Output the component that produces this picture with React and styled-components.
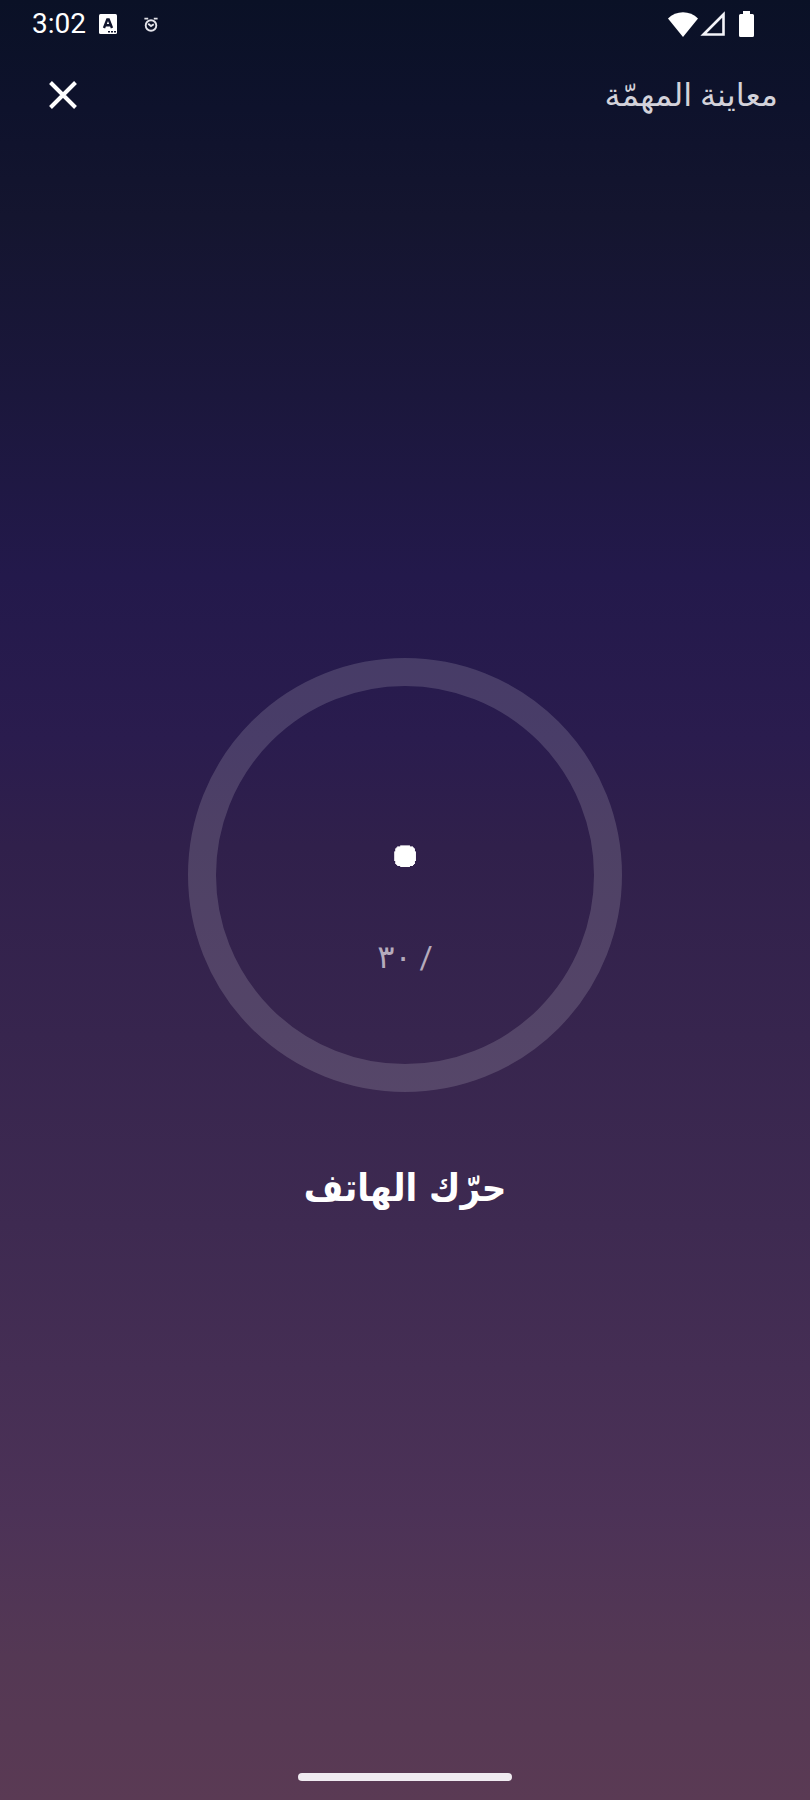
import React from "react";
import styled, { createGlobalStyle } from "styled-components";

const GlobalStyle = createGlobalStyle`
  * {
    box-sizing: border-box;
  }
  body {
    margin: 0;
    background-color: #10152a;
    color: #ffffff;
    font-family: Roboto, "DejaVu Sans", sans-serif;
  }
`;

const Screen = styled.div`
  display: flex;
  flex-direction: column;
  min-height: 100vh;
  background-image: linear-gradient(
    to bottom,
    #0a1126 0%,
    #0e122c 6%,
    #14152f 12%,
    #1b173c 22%,
    #23194b 32%,
    #2a1c4e 41%,
    #30204b 47%,
    #3e2a51 68%,
    #4c3257 84%,
    #543854 92%,
    #5a3a54 100%
  );
`;

const StatusBar = styled.div`
  display: flex;
  align-items: center;
  justify-content: space-between;
  height: 48px;
  padding: 0 56px 0 32px;
`;

const StatusGroup = styled.div`
  display: flex;
  align-items: center;
`;

const Clock = styled.time`
  margin-right: 13px;
  font-size: 28px;
  line-height: 32px;
`;

const StatusIcon = styled.svg`
  display: block;
  margin-left: ${(props) => props.$space || "0"};
`;

const Header = styled.header`
  display: flex;
  align-items: center;
  justify-content: space-between;
  height: 94px;
  padding: 0 32px;
`;

const CloseButton = styled.button`
  display: flex;
  align-items: center;
  justify-content: center;
  width: 62px;
  height: 62px;
  padding: 0;
  border: 0;
  background: none;
  color: #ffffff;
  cursor: pointer;
`;

const Title = styled.h1`
  margin: 0;
  color: #d3d2da;
  font-size: 32px;
  font-weight: 400;
  line-height: 48px;
`;

const Main = styled.main`
  flex: 1;
  display: flex;
  flex-direction: column;
  align-items: center;
  justify-content: center;
  gap: 66px;
  padding-bottom: 40px;
`;

const Ring = styled.div`
  display: flex;
  flex-direction: column;
  align-items: center;
  justify-content: center;
  gap: 20px;
  width: 434px;
  height: 434px;
  padding-top: 24px;
  border: 28px solid rgba(255, 255, 255, 0.15);
  border-radius: 50%;
`;

/* the shadows round off the square zero glyph */
const Count = styled.div`
  font-size: 56px;
  font-weight: 700;
  line-height: 120px;
  text-shadow:
    6px 0 #fff, -6px 0 #fff, 0 6px #fff, 0 -6px #fff,
    5px 3px #fff, -5px 3px #fff, 5px -3px #fff, -5px -3px #fff,
    3px 5px #fff, -3px 5px #fff, 3px -5px #fff, -3px -5px #fff,
    4px 4px #fff, -4px 4px #fff, 4px -4px #fff, -4px -4px #fff;
`;

const Total = styled.div`
  color: #b5abbc;
  font-size: 32px;
  line-height: 48px;
`;

const Instruction = styled.p`
  margin: 0;
  font-family: "DejaVu Sans Condensed", "DejaVu Sans", sans-serif;
  font-size: 38px;
  font-weight: 700;
  line-height: 60px;
`;

const NavHandle = styled.div`
  width: 214px;
  height: 8px;
  margin: 0 auto 19px;
  border-radius: 4px;
  background-color: #f0ebf1;
`;

const App = () => {
  return (
    <>
      <GlobalStyle />
      <Screen>
        <StatusBar>
          <StatusGroup>
            <Clock>3:02</Clock>
            <StatusIcon width="18" height="20" viewBox="0 0 18 20" aria-hidden="true">
              <rect width="18" height="20" rx="1.5" fill="#ffffff" />
              <path d="M5 14 8.300 5.500h1.400L13 14M6.200 11.300h5.600" fill="none" stroke="#10142c" strokeWidth="2.400" />
              <path d="M9 17h2v1.600H9zM12 17h2v1.600h-2zM15 17h2v1.600h-2z" fill="#10142c" />
            </StatusIcon>
            <StatusIcon $space="27px" width="14" height="15" viewBox="0 0 14 15" aria-hidden="true">
              <g fill="none" stroke="#e4e4ea" strokeWidth="1.900">
                <circle cx="7" cy="8.500" r="5.300" />
                <path d="M.4 1.600h3.800M13.600 1.600H9.800M4.200 6.800 7 9l2.800-1.800" />
              </g>
            </StatusIcon>
          </StatusGroup>
          <StatusGroup>
            <StatusIcon width="30" height="25" viewBox="0 0 30 25" aria-hidden="true">
              <path d="M0 6.500C8-2 22-2 30 6.500L15 25z" fill="#ffffff" />
            </StatusIcon>
            <StatusIcon $space="2px" width="26" height="26" viewBox="0 0 26 26" aria-hidden="true">
              <path d="M3.500 23.500 23.500 3.500v20z" fill="none" stroke="#f4f4f8" strokeWidth="2.600" />
            </StatusIcon>
            <StatusIcon $space="13px" width="15" height="26" viewBox="0 0 15 26" aria-hidden="true">
              <path
                d="M4 0h7v3h2.500A1.500 1.500 0 0 1 15 4.500v20a1.500 1.500 0 0 1-1.500 1.500h-12A1.500 1.500 0 0 1 0 24.500v-20A1.500 1.500 0 0 1 1.500 3H4z"
                fill="#ffffff"
              />
            </StatusIcon>
          </StatusGroup>
        </StatusBar>
        <Header>
          <CloseButton type="button" aria-label="إغلاق">
            <svg width="28" height="28" viewBox="0 0 28 28" aria-hidden="true">
              <path d="M1.500 1.500 26.500 26.500M26.500 1.500 1.500 26.500" stroke="currentColor" strokeWidth="4" />
            </svg>
          </CloseButton>
          <Title dir="rtl">معاينة المهمّة</Title>
        </Header>
        <Main dir="rtl">
          <Ring>
            <Count>٠</Count>
            <Total>/ ٣٠</Total>
          </Ring>
          <Instruction>حرّك الهاتف</Instruction>
        </Main>
        <NavHandle />
      </Screen>
    </>
  );
};

export default App;
